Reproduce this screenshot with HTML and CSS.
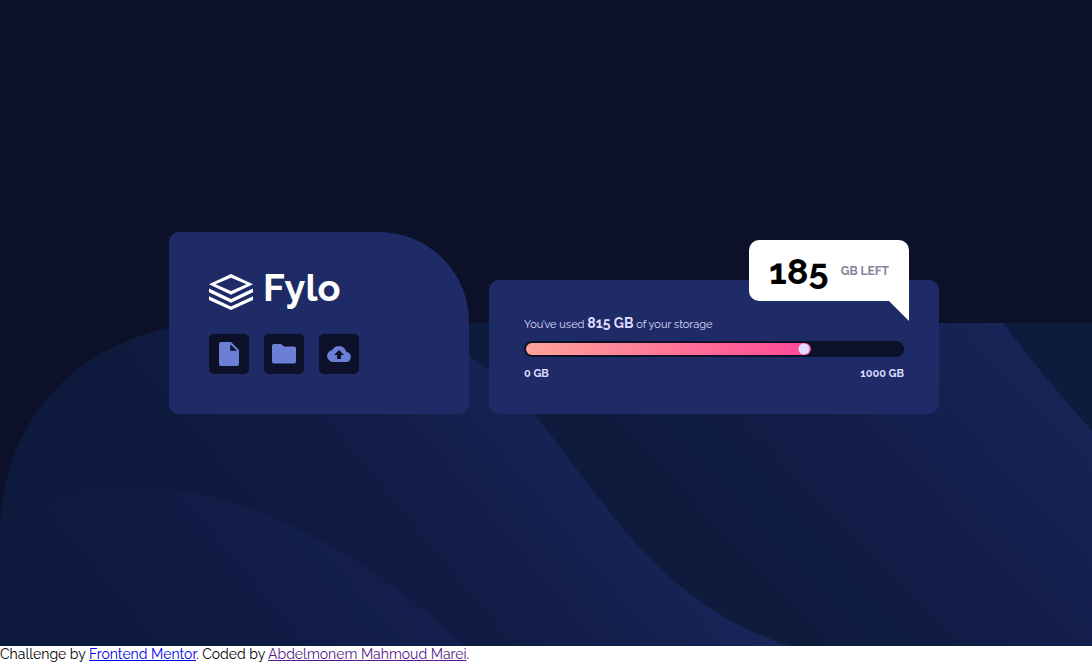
FILE: index.html
```html
<!DOCTYPE html>
<html lang="en">
<head>
<meta charset="utf-8">
<meta name="viewport" content="width=device-width, initial-scale=1">
<title>Fylo data storage</title>
<link rel="stylesheet" href="styles.css">
</head>
<body>
<main class="page">
  <svg class="waves" viewBox="0 0 1092 323" preserveAspectRatio="none" aria-hidden="true">
    <defs>
      <linearGradient id="g1" gradientUnits="userSpaceOnUse" x1="230" y1="180" x2="500" y2="-45">
        <stop offset="0" stop-color="#0e1a3d"/><stop offset="0.55" stop-color="#131e4a"/><stop offset="1" stop-color="#19265c"/>
      </linearGradient>
      <linearGradient id="g2" gradientUnits="userSpaceOnUse" x1="730" y1="240" x2="1015" y2="-30">
        <stop offset="0" stop-color="#0e1b3d"/><stop offset="0.5" stop-color="#131e4b"/><stop offset="1" stop-color="#182559"/>
      </linearGradient>
      <linearGradient id="g3" gradientUnits="userSpaceOnUse" x1="110" y1="290" x2="300" y2="130">
        <stop offset="0" stop-color="#0e1a3d"/><stop offset="1" stop-color="#141f4e"/>
      </linearGradient>
    </defs>
    <path fill="#0d1b3d" d="M0 323V207C3 95 80 12 200 0H1092V323Z"/>
    <path fill="url(#g2)" d="M500 0H1003C1034 41 1062 75 1092 108V323H500Z"/>
    <path fill="url(#g1)" d="M0 323V207C3 95 80 12 200 0H400C490 30 533 88 575 144C625 210 680 288 790 323Z"/>
    <path fill="url(#g3)" d="M0 323V202C40 175 85 163 129 163C230 163 350 215 463 323Z"/>
  </svg>

  <div class="cards">
    <section class="card brand">
      <h1 class="logo">
        <svg class="logo-mark" viewBox="0 0 44 36" aria-hidden="true">
          <path fill="#fff" fill-rule="evenodd" d="M22 0 44 10.300 22 20.700 0 10.300ZM22 3.800 6.500 10.300 22 17 37.500 10.300Z"/>
          <path fill="#fff" d="M0 14.500 22 25 44 14.500V18.300L22 28.700 0 18.300ZM0 22.200 22 32.400 44 22.200V26L22 36 0 26Z"/>
        </svg>
        <span>Fylo</span>
      </h1>
      <div class="actions">
        <button class="action" type="button" aria-label="Documents">
          <svg width="20" height="24" viewBox="0 0 20 24" aria-hidden="true"><path fill="#6b7fd7" fill-rule="evenodd" d="M2 0H12L20 8V22Q20 24 18 24H2Q0 24 0 22V2Q0 0 2 0ZM11.300 2.200V8.800H18Z"/></svg>
        </button>
        <button class="action" type="button" aria-label="Folders">
          <svg width="24" height="20" viewBox="0 0 24 20" aria-hidden="true"><path fill="#6b7fd7" d="M2 0H9L12 2.500H22Q24 2.500 24 4.500V17.500Q24 19.500 22 19.500H2Q0 19.500 0 17.500V2Q0 0 2 0Z"/></svg>
        </button>
        <button class="action" type="button" aria-label="Upload">
          <svg width="24" height="16" viewBox="0 0 24 16" aria-hidden="true"><path fill="#6b7fd7" fill-rule="evenodd" d="M19.350 6.040A7.490 7.490 0 0 0 12 0 7.500 7.500 0 0 0 5.350 4.040 6 6 0 0 0 6 16H19A5 5 0 0 0 19.350 6.040ZM14 9V13H10V9H7L12 4 17 9Z"/></svg>
        </button>
      </div>
    </section>

    <section class="card usage">
      <label class="used" for="storage">You’ve used <strong>815 GB</strong> of your storage</label>
      <progress class="meter" id="storage" value="758" max="1000"></progress>
      <div class="scale"><span>0 GB</span><span>1000 GB</span></div>
      <div class="bubble"><strong class="left-amount">185</strong><span class="left-label">GB LEFT</span></div>
    </section>
  </div>
</main>
<footer class="attribution">Challenge by <a href="#mentor">Frontend Mentor</a>. Coded by <a class="visited" href="#author">Abdelmonem Mahmoud Marei</a>.</footer>
</body>
</html>
```
FILE: styles.css
```css
* { box-sizing: border-box; }

body {
  margin: 0;
  min-height: 100vh;
  display: flex;
  flex-direction: column;
  background: #fff;
  color: #000;
  font: 14px/16px Raleway, Lato, sans-serif;
}

.page {
  position: relative;
  flex: 1;
  display: flex;
  align-items: center;
  justify-content: center;
  padding: 20px 0 20px 16px;
  background: #0c1129;
}

.waves {
  position: absolute;
  inset: 50% 0 0;
  width: 100%;
  height: 50%;
}

.cards {
  position: relative;
  display: flex;
  flex-wrap: wrap;
  align-items: flex-end;
  justify-content: center;
  gap: 20px;
}

.card {
  background: #1e2b66;
  border-radius: 10px;
}

.brand {
  width: 300px;
  padding: 40px;
  border-top-right-radius: 90px;
}

.logo {
  display: flex;
  align-items: center;
  gap: 10px;
  height: 40px;
  margin: 0 0 22px;
  color: #fff;
  font-size: 38px;
  font-weight: 700;
  line-height: 32px;
}

.logo span { padding-bottom: 8px; }

.logo-mark {
  width: 44px;
  height: 36px;
}

.actions {
  display: flex;
  gap: 15px;
}

.action {
  width: 40px;
  height: 40px;
  display: grid;
  place-items: center;
  padding: 0;
  border: 0;
  border-radius: 5px;
  background: #0c1129;
}

.usage {
  position: relative;
  width: 450px;
  padding: 35px 35px 32px;
  color: #dfdbff;
}

.used {
  display: block;
  margin-bottom: 8px;
  font-size: 11px;
}

.used strong { font-size: 14px; }

.meter {
  appearance: none;
  display: block;
  width: 100%;
  height: 16px;
  margin-bottom: 9px;
  padding: 2px;
  border: 0;
  border-radius: 8px;
  background: #0c1129;
}

.meter::-webkit-progress-bar { background: transparent; }

.meter::-webkit-progress-value {
  border-radius: 6px;
  background:
    radial-gradient(circle at calc(100% - 7px) 50%, #dfdbff 5px, transparent 6px),
    linear-gradient(90deg, #ffa399, #ff4896);
}

.scale {
  display: flex;
  justify-content: space-between;
  font-size: 11px;
  font-weight: 700;
}

.bubble {
  position: absolute;
  top: -40px;
  right: 30px;
  width: 160px;
  height: 61px;
  display: flex;
  align-items: center;
  justify-content: space-between;
  padding: 0 20px;
  border-radius: 10px 10px 0 10px;
  background: #fff;
}

.bubble::after {
  content: "";
  position: absolute;
  top: 100%;
  right: 0;
  width: 20px;
  height: 20px;
  background: #fff;
  clip-path: polygon(0 0, 100% 0, 100% 100%);
}

.left-amount {
  color: #000;
  font-size: 36px;
  line-height: 40px;
}

.left-label {
  color: #83869a;
  font-size: 12px;
  font-weight: 700;
}

.attribution a { color: #00e; }
.attribution a.visited { color: #551a8b; }
```
